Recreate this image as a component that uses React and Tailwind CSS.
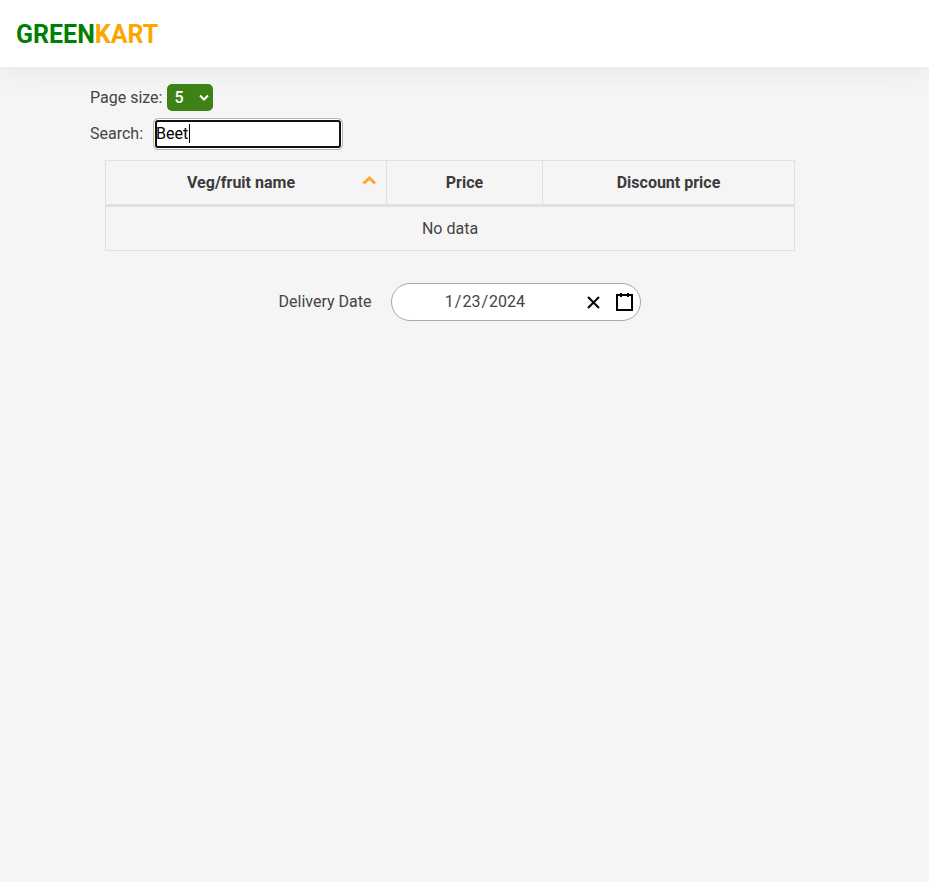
import { useState } from "react";

const columns = [
  { label: "Veg/fruit name", width: "w-[281px]", sorted: true },
  { label: "Price", width: "w-[156px]" },
  { label: "Discount price", width: "" },
];

function Header() {
  return (
    <header className="flex h-[67px] items-center bg-white px-4 pt-[2px] shadow-[0_2px_30px_0_rgba(0,0,0,0.07)]">
      <a href="#" className="text-[25px] leading-8 font-bold text-[#008000]">
        GREEN<span className="text-[#ffa500]">KART</span>
      </a>
    </header>
  );
}

function SortIcon() {
  return (
    <svg className="mb-1" width="14" height="9" viewBox="0 0 14 9" fill="none" aria-hidden="true">
      <path d="M1.5 7.5L7.5 2l5.5 5.5" stroke="#ffa52f" strokeWidth="3" />
    </svg>
  );
}

function PageSize() {
  return (
    <div className="flex items-center gap-[5px]">
      <label htmlFor="page-size">Page size:</label>
      <div className="relative">
        <select
          id="page-size"
          defaultValue="5"
          className="block h-[27px] w-[46px] appearance-none rounded-[5px] bg-[#3e8116] pl-[7px] font-medium text-white"
        >
          <option>5</option>
          <option>10</option>
          <option>20</option>
        </select>
        <svg
          className="pointer-events-none absolute top-[10px] right-1"
          width="10"
          height="8"
          viewBox="0 0 10 8"
          fill="none"
          aria-hidden="true"
        >
          <path d="M1 1.5l4 4 4-4" stroke="#fff" strokeWidth="2" />
        </svg>
      </div>
    </div>
  );
}

function Search() {
  const [query, setQuery] = useState("Beet");
  return (
    <div className="mt-[7px] flex items-center gap-[10px]">
      <label htmlFor="search">Search:</label>
      <div className="relative">
        <input
          id="search"
          type="text"
          value={query}
          onChange={(e) => setQuery(e.target.value)}
          className="block h-8 w-[190px] rounded-[5px] border border-[#b8b8a2] bg-white px-[2px] pb-[2px] text-black caret-black shadow-[inset_0_0_0_1px_#fff,inset_0_0_0_3px_#101010] outline-none"
        />
        <span className="pointer-events-none absolute top-[6px] left-9 h-[19px] w-px bg-black" />
      </div>
    </div>
  );
}

function ProductTable() {
  return (
    <div className="mt-[10px] px-[15px]">
      <table className="w-full table-fixed border-collapse border border-[#dee2e6] text-center">
        <thead>
          <tr>
            {columns.map((c) => (
              <th
                key={c.label}
                className={`${c.width} h-[45px] border border-b-[3px] border-[#dee2e6] px-[10px] font-bold text-[#3b3b3b]`}
              >
                {c.sorted ? (
                  <span className="flex items-center">
                    <span className="flex-1 pl-1">{c.label}</span>
                    <SortIcon />
                  </span>
                ) : (
                  c.label
                )}
              </th>
            ))}
          </tr>
        </thead>
        <tbody>
          <tr>
            <td colSpan={3} className="h-[45px] border border-[#dee2e6]">
              No data
            </td>
          </tr>
        </tbody>
      </table>
    </div>
  );
}

function DeliveryDate() {
  return (
    <div className="mt-8 flex items-center justify-center gap-5 pl-5">
      <label htmlFor="month">Delivery Date</label>
      <div className="flex h-[38px] w-[250px] items-center rounded-full border border-[#a8a8a8] bg-white">
        <div className="flex flex-1 items-center justify-center">
          <input id="month" aria-label="Month" defaultValue="1" className="w-[9px] outline-none" />
          <span className="px-px">/</span>
          <input aria-label="Day" defaultValue="23" className="w-[18px] outline-none" />
          <span className="px-px">/</span>
          <input aria-label="Year" defaultValue="2024" className="w-[37px] outline-none" />
        </div>
        <button type="button" aria-label="Clear date" className="px-[6px]">
          <svg width="19" height="19" viewBox="0 0 19 19" stroke="#000" strokeWidth="2" aria-hidden="true">
            <path d="M4 4l11 11M15 4L4 15" />
          </svg>
        </button>
        <button type="button" aria-label="Open calendar" className="px-[6px]">
          <svg width="19" height="19" viewBox="0 0 19 19" fill="none" stroke="#000" strokeWidth="2" aria-hidden="true">
            <path d="M2 2h15v15H2zM6 0v4M13 0v4" />
          </svg>
        </button>
      </div>
    </div>
  );
}

export default function App() {
  return (
    <div className="min-h-screen bg-[#f5f5f5] font-[Roboto,'Liberation_Sans',sans-serif] text-[16px] leading-6 text-[#444]">
      <Header />
      <main className="mr-[119px] ml-[90px] pt-[17px]">
        <PageSize />
        <Search />
        <ProductTable />
        <DeliveryDate />
      </main>
    </div>
  );
}
